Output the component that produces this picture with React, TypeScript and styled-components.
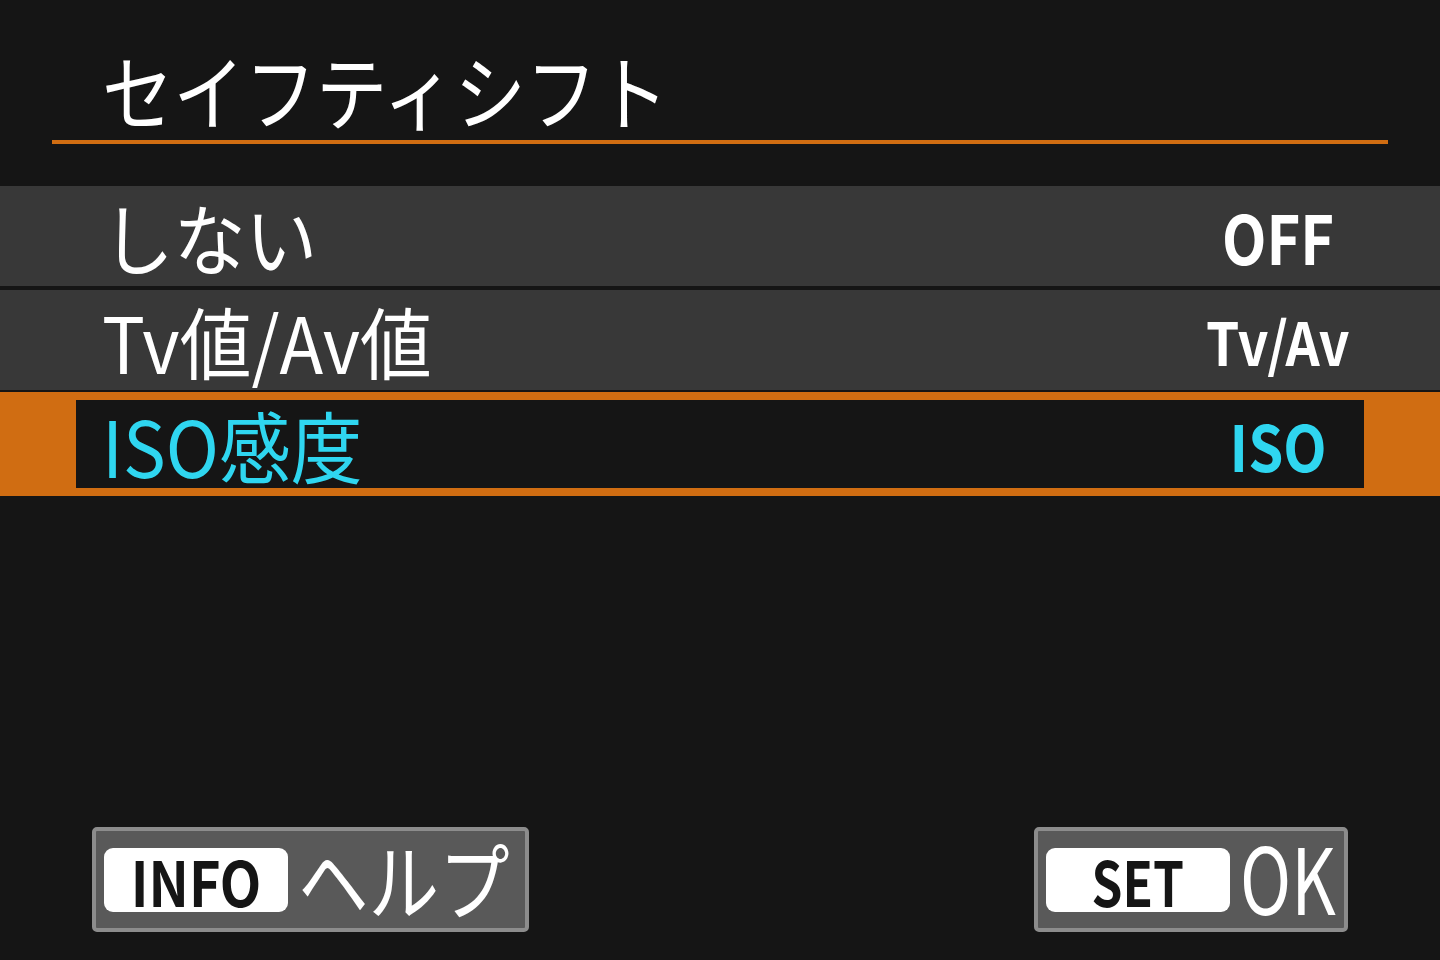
import React from 'react'
import styled, { createGlobalStyle } from 'styled-components'

const GlobalStyle = createGlobalStyle`
  html, body {
    margin: 0;
    padding: 0;
    background: #151515;
  }
  body {
    font-family: "Noto Sans CJK JP", "Noto Sans", sans-serif;
  }
`

const ORANGE = '#d06d12'

const Screen = styled.div`
  width: 1440px;
  height: 960px;
  background: #151515;
  display: flex;
  flex-direction: column;
  overflow: hidden;
  color: #fff;
`

const Header = styled.header`
  padding: 48px 52px 0;
`

const Title = styled.h1`
  margin: 0;
  padding-left: 50px;
  font-size: 82px;
  font-weight: 400;
  line-height: 82px;
  white-space: nowrap;
`

const Rule = styled.div`
  margin-top: 10px;
  height: 4px;
  background: ${ORANGE};
`

// condensed lettering of the camera menu font
const Squeeze = styled.span<{ $x: number; $origin?: string }>`
  display: inline-block;
  transform: scaleX(${p => p.$x});
  transform-origin: ${p => p.$origin ?? 'left center'};
  white-space: nowrap;
`

const List = styled.ul`
  list-style: none;
  margin: 42px 0 0;
  padding: 0;
  display: flex;
  flex-direction: column;
`

const Row = styled.li<{ $selected?: boolean }>`
  box-sizing: border-box;
  height: ${p => (p.$selected ? 104 : 100)}px;
  margin-bottom: 4px;
  display: flex;
  align-items: center;
  border-style: solid;
  border-width: ${p => (p.$selected ? '8px' : '0')} 76px;
  border-color: ${p => (p.$selected ? ORANGE : 'transparent')};
  background: ${p => (p.$selected ? '#151515' : '#383838')};
  color: ${p => (p.$selected ? '#2fd6f0' : '#fff')};
  &:nth-child(2) {
    margin-bottom: 2px;
  }
`

const Label = styled.span`
  flex: 1;
  padding-left: 26px;
  font-size: 78px;
  line-height: 1;
`

const Value = styled.span<{ $size: number }>`
  width: 172px;
  text-align: center;
  font-size: ${p => p.$size}px;
  font-weight: 700;
  line-height: 1;
`

const Footer = styled.footer`
  margin-top: auto;
  padding: 0 92px 28px;
  display: flex;
  justify-content: space-between;
`

const HardKey = styled.div<{ $width: number }>`
  box-sizing: border-box;
  width: ${p => p.$width}px;
  height: 105px;
  border: 4px solid #8c8c8c;
  border-radius: 5px;
  background: #595959;
  display: flex;
  align-items: center;
  padding-left: 8px;
  gap: 10px;
`

const KeyCap = styled.span`
  box-sizing: border-box;
  flex: none;
  width: 184px;
  height: 64px;
  border-radius: 9px;
  background: #fff;
  color: #151515;
  display: flex;
  align-items: center;
  justify-content: center;
  font-size: 62px;
  font-weight: 700;
  line-height: 1;
`

const KeyText = styled.span<{ $size: number; $lift?: number }>`
  flex: none;
  font-size: ${p => p.$size}px;
  line-height: 1;
  padding-bottom: ${p => (p.$lift ?? 0) * 2}px;
  color: #fff;
`

const options = [
  { label: 'しない', value: 'OFF', size: 68, squeeze: 0.85 },
  { label: 'Tv値/Av値', value: 'Tv/Av', size: 60, squeeze: 0.89 },
  { label: 'ISO感度', value: 'ISO', size: 64, squeeze: 0.88 }
]

const selectedIndex = 2

export default function App() {
  return (
    <>
      <GlobalStyle />
      <Screen>
        <Header>
          <Title>
            <Squeeze $x={0.87}>セイフティシフト</Squeeze>
          </Title>
          <Rule />
        </Header>

        <List>
          {options.map((o, i) => (
            <Row key={o.value} $selected={i === selectedIndex}>
              <Label>
                <Squeeze $x={0.92}>{o.label}</Squeeze>
              </Label>
              <Value $size={o.size}>
                <Squeeze $x={o.squeeze} $origin="center">
                  {o.value}
                </Squeeze>
              </Value>
            </Row>
          ))}
        </List>

        <Footer>
          <HardKey $width={437}>
            <KeyCap>
              <Squeeze $x={0.87} $origin="center">INFO</Squeeze>
            </KeyCap>
            <KeyText $size={84} $lift={2}>
              <Squeeze $x={0.84}>ヘルプ</Squeeze>
            </KeyText>
          </HardKey>
          <HardKey $width={314}>
            <KeyCap>
              <Squeeze $x={0.8} $origin="center">SET</Squeeze>
            </KeyCap>
            <KeyText $size={92} $lift={5}>
              <Squeeze $x={0.75}>OK</Squeeze>
            </KeyText>
          </HardKey>
        </Footer>
      </Screen>
    </>
  )
}
